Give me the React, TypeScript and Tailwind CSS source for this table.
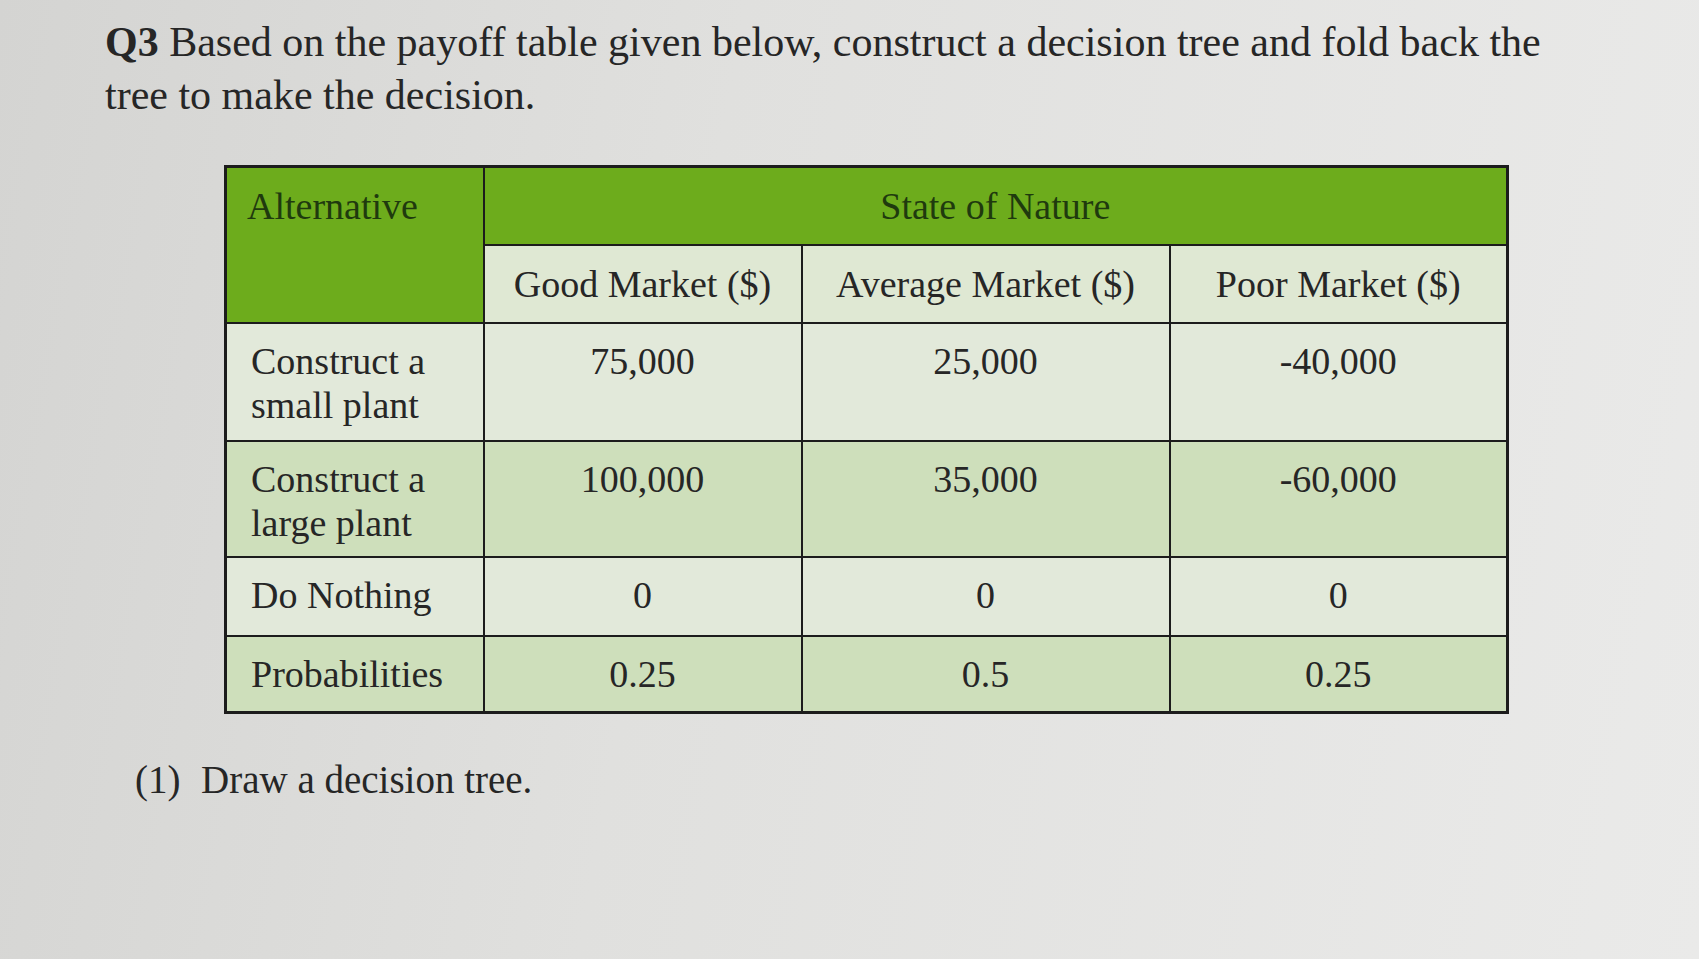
import React from "react";

const rows = [
  { label: ["Construct a", "small plant"], values: ["75,000", "25,000", "-40,000"], tone: "light", h: "h-[118px]" },
  { label: ["Construct a", "large plant"], values: ["100,000", "35,000", "-60,000"], tone: "mid", h: "h-[116px]" },
  { label: ["Do Nothing"], values: ["0", "0", "0"], tone: "light", h: "h-[79px]" },
  { label: ["Probabilities"], values: ["0.25", "0.5", "0.25"], tone: "mid", h: "h-[77px]" },
];

export default function App() {
  return (
    <div
      className="w-[1699px] h-[959px] overflow-hidden bg-[linear-gradient(100deg,#d4d4d2_0%,#e0e0de_40%,#eaeae9_100%)] text-[#262626]"
      style={{ fontFamily: '"Liberation Serif", "Times New Roman", serif' }}
    >
      {/* Question */}
      <div className="pl-[105px] pt-[16px] text-[42px] leading-[53px] pr-[120px]">
        <p>
          <b>Q3 </b>Based on the payoff table given below, construct a decision tree and fold back the tree to make the decision.
        </p>
      </div>

      {/* Payoff table */}
      <div className="ml-[224px] mt-[43px]">
        <table className="border-collapse border-[3px] border-[#1c1c1c] text-[38px] leading-[44px] w-[1282px] table-fixed">
          <colgroup>
            <col className="w-[258px]" />
            <col className="w-[318px]" />
            <col className="w-[368px]" />
            <col className="w-[338px]" />
          </colgroup>
          <tbody>
            <tr className="h-[78px]">
              <td rowSpan={2} className="align-top bg-[#6dac1c] border-2 border-[#1c1c1c] pl-[20px] pt-[16px] text-[#1f3a0e]">
                Alternative
              </td>
              <td colSpan={3} className="bg-[#6dac1c] border-2 border-[#1c1c1c] text-center text-[#1f3a0e]">
                State of Nature
              </td>
            </tr>
            <tr className="h-[78px]">
              {["Good Market ($)", "Average Market ($)", "Poor Market ($)"].map((t) => (
                <td key={t} className="bg-[#dfe8d3] border-2 border-[#1c1c1c] text-center">
                  {t}
                </td>
              ))}
            </tr>
            {rows.map((r, i) => (
              <tr key={i} className={r.h}>
                <td className={`align-top border-2 border-[#1c1c1c] pl-[24px] pt-[15px] ${r.tone === "light" ? "bg-[#e2e9da]" : "bg-[#cedfbb]"}`}>
                  {r.label.map((l) => (
                    <div key={l}>{l}</div>
                  ))}
                </td>
                {r.values.map((v, j) => (
                  <td key={j} className={`align-top border-2 border-[#1c1c1c] text-center pt-[15px] ${r.tone === "light" ? "bg-[#e2e9da]" : "bg-[#cedfbb]"}`}>
                    {v}
                  </td>
                ))}
              </tr>
            ))}
          </tbody>
        </table>
      </div>

      {/* Sub question */}
      <div className="pl-[135px] mt-[44px] text-[39px] leading-[44px] flex">
        <span className="w-[66px]">(1)</span>
        <span>Draw a decision tree.</span>
      </div>
    </div>
  );
}
